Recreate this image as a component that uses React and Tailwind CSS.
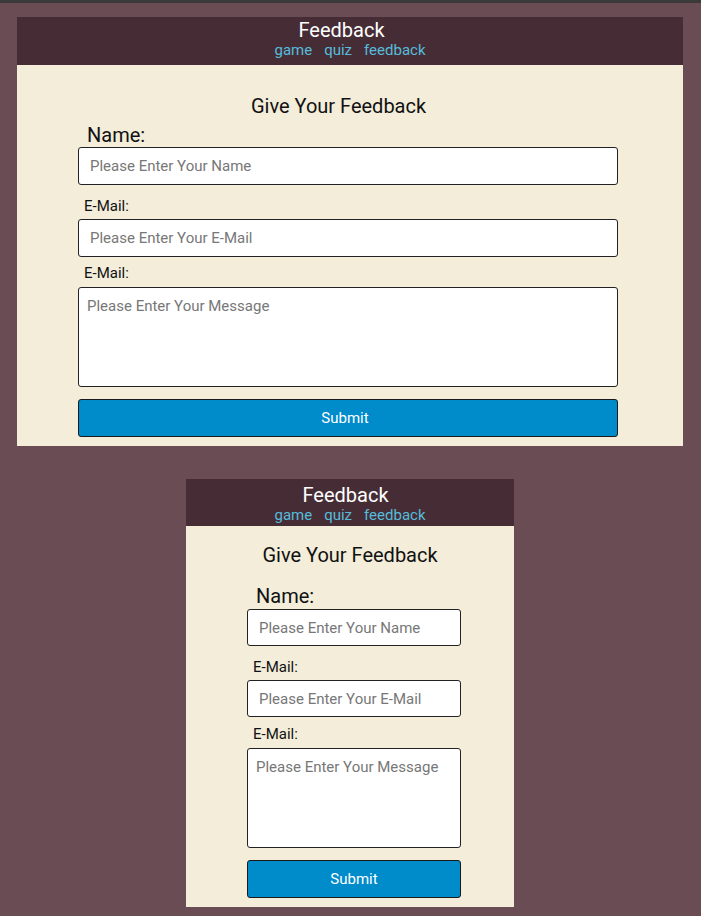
const font = { fontFamily: 'Roboto, "Noto Sans", sans-serif' };

const FeedbackCard = ({ cardClass, headerClass, brandClass, bodyClass, titleClass, formClass, nameClass, inputClass, mailClass, mail2Class, buttonClass }) => (
  <div className={`bg-[#f3edda] ${cardClass}`}>
    <div className={`bg-[#462d35] flex flex-col items-center ${headerClass}`}>
      <h1 className={`text-[20px] leading-[22px] text-white ${brandClass}`}>Feedback</h1>
      <nav className="flex gap-[12px] text-[15px] leading-[18px] text-[#55bcdc]">
        <a href="#">game</a>
        <a href="#">quiz</a>
        <a href="#">feedback</a>
      </nav>
    </div>
    <div className={`flex flex-col ${bodyClass}`}>
      <h2 className={`text-[20px] leading-[24px] text-[#111] text-center ${titleClass}`}>Give Your Feedback</h2>
      <form className={`flex flex-col ${formClass}`} onSubmit={(e) => e.preventDefault()}>
        <label className={`text-[20px] leading-[24px] text-[#111] pl-[9px] ${nameClass}`}>Name:</label>
        <input
          type="text"
          placeholder="Please Enter Your Name"
          className={`bg-white border border-[#222] rounded-[3px] px-[11px] text-[15px] placeholder-[#777] outline-none ${inputClass}`}
        />
        <label className={`text-[15px] leading-[18px] text-[#111] pl-[6px] ${mailClass}`}>E-Mail:</label>
        <input
          type="email"
          placeholder="Please Enter Your E-Mail"
          className={`bg-white border border-[#222] rounded-[3px] px-[11px] text-[15px] placeholder-[#777] outline-none mt-[4px] ${inputClass}`}
        />
        <label className={`text-[15px] leading-[18px] text-[#111] pl-[6px] ${mail2Class}`}>E-Mail:</label>
        <textarea
          placeholder="Please Enter Your Message"
          className="bg-white border border-[#222] rounded-[3px] px-[8px] pt-[7px] text-[15px] placeholder-[#777] outline-none resize-none h-[100px] mt-[5px]"
        />
        <button
          type="submit"
          className={`bg-[#008bcb] border border-[#1a1a1a] rounded-[3px] text-white text-[15px] mt-[12px] ${buttonClass}`}
        >
          Submit
        </button>
      </form>
    </div>
  </div>
);

export default function App() {
  return (
    <div className="min-h-[916px] bg-[#6a4c55] border-t-[3px] border-[#3a3a3a] pt-[14px] pb-[9px]" style={font}>
      <FeedbackCard
        cardClass="w-[666px] ml-[17px]"
        headerClass="h-[48px] pt-[2px]"
        brandClass="pr-[17px]"
        bodyClass="pt-[29px] pb-[9px]"
        titleClass="pr-[23px]"
        formClass="w-[540px] ml-[61px]"
        nameClass="mt-[5px]"
        inputClass="h-[38px]"
        mailClass="mt-[12px]"
        mail2Class="mt-[7px]"
        buttonClass="h-[38px] pr-[6px]"
      />
      <div className="h-[33px]" />
      <FeedbackCard
        cardClass="w-[328px] ml-[186px]"
        headerClass="h-[47px] pt-[5px]"
        brandClass="pr-[9px]"
        bodyClass="pt-[17px] pb-[9px]"
        titleClass=""
        formClass="w-[214px] ml-[61px]"
        nameClass="mt-[17px]"
        inputClass="h-[37px] mt-[1px]"
        mailClass="mt-[12px]"
        mail2Class="mt-[8px]"
        buttonClass="h-[38px]"
      />
    </div>
  );
}
